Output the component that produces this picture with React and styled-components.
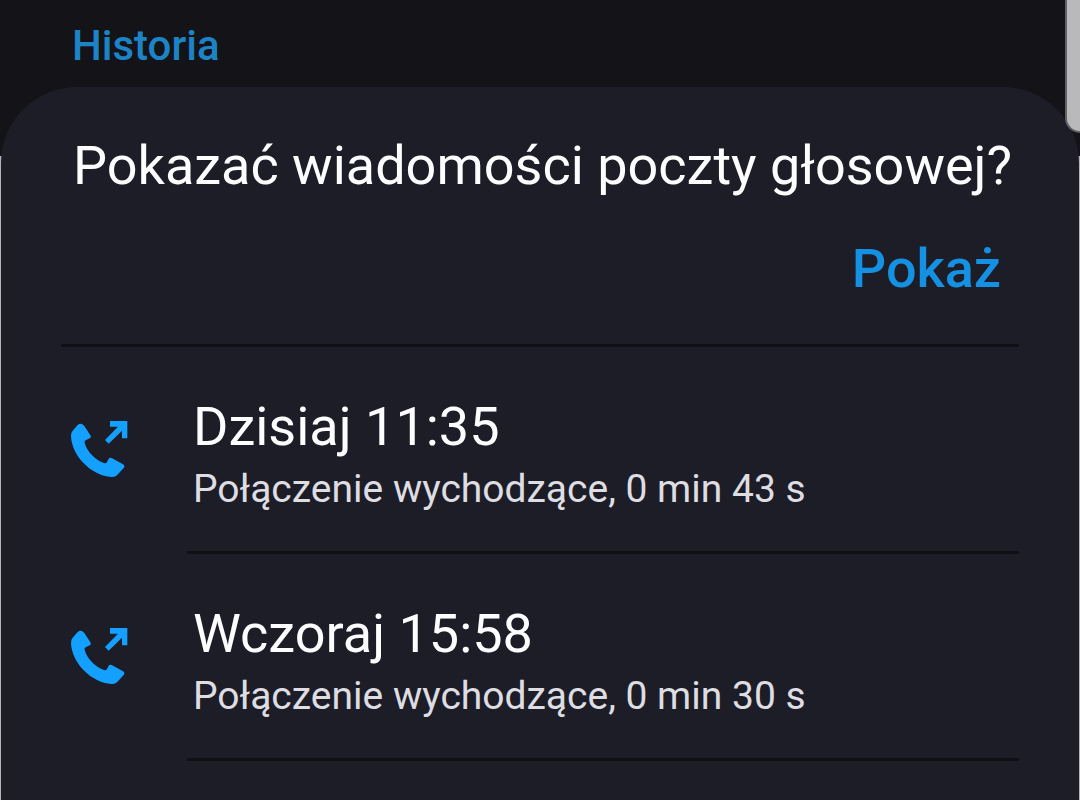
import React from "react";
import styled, { createGlobalStyle } from "styled-components";

const GlobalStyle = createGlobalStyle`
  * { box-sizing: border-box; }
  body {
    margin: 0;
    background: #1d1d28;
    color: #fdfdff;
    font-family: Roboto, "Noto Sans", sans-serif;
  }
`;

const Page = styled.main`
  position: relative;
  min-height: 100vh;
  display: flex;
  flex-direction: column;
  overflow: hidden;
  background: linear-gradient(#141318 156px, #b4b4b8 156px);
`;

const Header = styled.header`
  padding: 21px 72px 16px;
`;

const Heading = styled.h1`
  margin: 0;
  color: #1c84c6;
  font-size: 42px;
  line-height: 50px;
  font-weight: 500;
`;

const Card = styled.section`
  flex: 1;
  margin: 0 1px;
  padding: 47px 60px 0;
  border-radius: 76px 76px 0 0;
  background: #1d1d28;
`;

const Prompt = styled.div`
  display: flex;
  flex-direction: column;
  gap: 39px;
  padding: 0 0 43px 12px;
  border-bottom: 3px solid #111017;
`;

const Question = styled.p`
  margin: 0;
  font-size: 54px;
  line-height: 64px;
  white-space: nowrap;
`;

const ShowButton = styled.button`
  align-self: flex-end;
  margin-right: 18px;
  padding: 0;
  border: 0;
  background: none;
  color: #1591e4;
  font-family: inherit;
  font-size: 54px;
  line-height: 64px;
  font-weight: 500;
  cursor: pointer;
`;

const CallList = styled.ul`
  margin: 0;
  padding: 0;
  list-style: none;
`;

const CallRow = styled.li`
  display: flex;
  padding-left: 9px;
`;

const CallIcon = styled.svg`
  flex: none;
  width: 58px;
  height: 58px;
  margin: 73px 59px 0 0;
  fill: #14a0ff;
`;

const CallText = styled.div`
  flex: 1;
  display: flex;
  flex-direction: column;
  gap: 7px;
  padding: 48px 0 39px 6px;
  border-bottom: 3px solid #111017;
`;

const CallTime = styled.span`
  font-size: 54px;
  line-height: 64px;
`;

const CallDetail = styled.span`
  color: #dedee2;
  font-size: 39px;
  line-height: 46px;
`;

const ScrollThumb = styled.div`
  position: absolute;
  top: 0;
  right: 0;
  width: 15px;
  height: 133px;
  border: solid #626165;
  border-width: 0 0 2px 2px;
  border-radius: 0 0 0 16px;
  background: #b9b9bb;
`;

const calls = [
  { time: "Dzisiaj 11:35", detail: "Połączenie wychodzące, 0 min 43 s" },
  { time: "Wczoraj 15:58", detail: "Połączenie wychodzące, 0 min 30 s" },
];

function OutgoingCallIcon() {
  return (
    <CallIcon viewBox="60 60 174 174" aria-hidden="true">
      <path d="M83 75 Q92 68 99 74 Q104 78 107 84 L121 106 Q125 112 119 115 L107 121 Q102 123 104 129 C111 155 137 181 162 189 Q168 191 171 186 L176 176 Q179 171 185 174 L219 193 Q226 198 221 204 L201 226 Q195 232 185 231 C123 227 65 167 63 108 Q62 99 68 92 Z" />
      <path d="M180 63 H232 V115 H216 V92 L176 131 L165 120 L204 80 H180 Z" />
    </CallIcon>
  );
}

export default function App() {
  return (
    <>
      <GlobalStyle />
      <Page>
        <Header>
          <Heading>Historia</Heading>
        </Header>
        <Card>
          <Prompt>
            <Question>Pokazać wiadomości poczty głosowej?</Question>
            <ShowButton type="button">Pokaż</ShowButton>
          </Prompt>
          <CallList>
            {calls.map((call) => (
              <CallRow key={call.time}>
                <OutgoingCallIcon />
                <CallText>
                  <CallTime>{call.time}</CallTime>
                  <CallDetail>{call.detail}</CallDetail>
                </CallText>
              </CallRow>
            ))}
          </CallList>
        </Card>
        <ScrollThumb />
      </Page>
    </>
  );
}
